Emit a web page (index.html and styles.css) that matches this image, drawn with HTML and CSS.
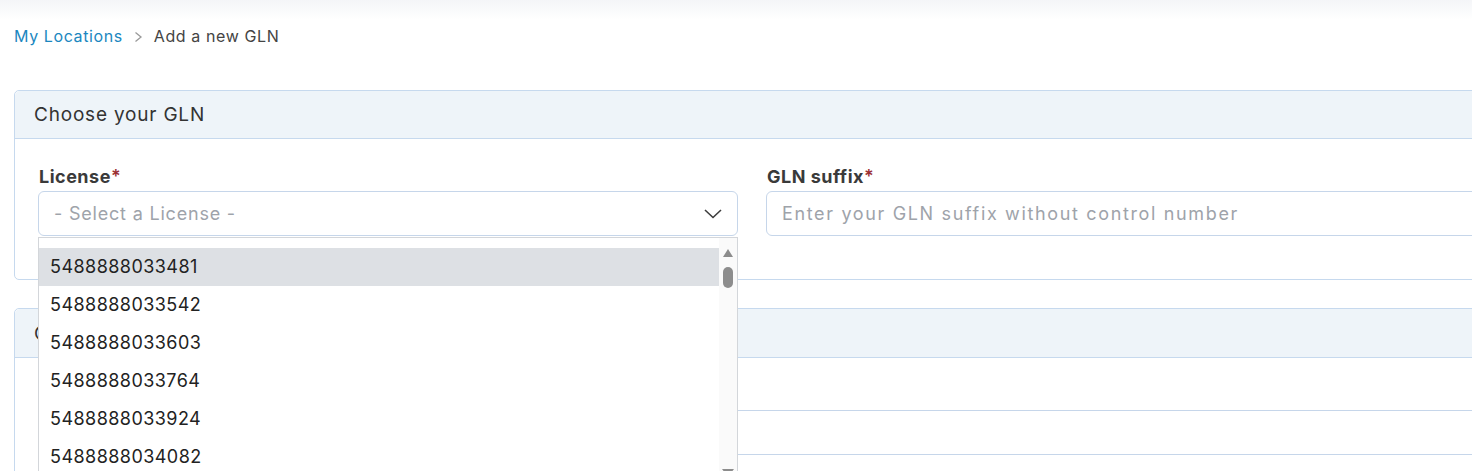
FILE: index.html
```html
<!DOCTYPE html>
<html lang="en">
<head>
<meta charset="utf-8">
<title>Add a new GLN</title>
<link rel="stylesheet" href="styles.css">
</head>
<body>
<div class="topshade"></div>
<nav class="breadcrumb">
  <a class="crumb-link" href="#">My Locations</a>
  <svg class="crumb-sep" width="9" height="12" viewBox="0 0 9 12"><path d="M1.5 1.5 L7 6 L1.5 10.5" fill="none" stroke="#9a9a9a" stroke-width="1.3"/></svg>
  <span class="crumb-current">Add a new GLN</span>
</nav>
<main class="main">
  <section class="card">
    <header class="card-header">Choose your GLN</header>
    <div class="card-body">
      <div class="grid">
        <div class="field">
          <label class="label">License<span class="req">*</span></label>
          <div class="select-wrap">
            <div class="select">
              <span class="placeholder ph-select">- Select a License -</span>
              <svg class="chev" width="18" height="10" viewBox="0 0 18 10"><path d="M1 1 L9 8.5 L17 1" fill="none" stroke="#3d3d3d" stroke-width="1.6"/></svg>
            </div>
            <div class="listbox">
              <ul class="options">
                <li class="option active">5488888033481</li>
                <li class="option">5488888033542</li>
                <li class="option">5488888033603</li>
                <li class="option">5488888033764</li>
                <li class="option">5488888033924</li>
                <li class="option">5488888034082</li>
              </ul>
              <div class="scrollbar">
                <span class="arrow-up"></span>
                <span class="thumb"></span>
                <span class="arrow-down"></span>
              </div>
            </div>
          </div>
        </div>
        <div class="field">
          <label class="label">GLN suffix<span class="req">*</span></label>
          <div class="input"><span class="placeholder ph-suffix">Enter your GLN suffix without control number</span></div>
        </div>
      </div>
    </div>
  </section>
  <section class="card card2">
    <header class="card-header header2">Company details</header>
    <div class="card-body">
      <label class="label">Location name<span class="req">*</span></label>
      <div class="input wide"></div>
    </div>
  </section>
</main>
</body>
</html>
```

FILE: styles.css
```css
html, body {
  margin: 0;
  padding: 0;
  background: #ffffff;
  overflow: hidden;
  height: 471px;
}
body {
  font-family: "Inter", "Lato", sans-serif;
  color: #333;
}
.topshade {
  height: 20px;
  background: linear-gradient(#f4f5f8, #ffffff);
}
.breadcrumb {
  display: flex;
  align-items: center;
  padding-left: 14px;
  height: 32px;
  font-size: 16px;
  letter-spacing: 0.6px;
}
.crumb-link {
  color: #1b87bf;
  text-decoration: none;
}
.crumb-sep {
  margin: 2px 11px 0 11px;
}
.crumb-current {
  color: #444;
}
.main {
  padding: 38px 0 0 14px;
  width: 1530px;
}
.card {
  border: 1px solid #c6d9ee;
  border-radius: 5px;
  background: #fff;
}
.card2 {
  margin-top: 28px;
}
.card-header {
  height: 47px;
  display: flex;
  align-items: center;
  padding-left: 19px;
  background: #eef4f9;
  border-bottom: 1px solid #c6d9ee;
  border-radius: 5px 5px 0 0;
  font-size: 19px;
  letter-spacing: 0.8px;
  color: #333;
}
.header2 {
  height: 48px;
}
.card-body {
  padding: 27px 23px 43px;
}
.grid {
  display: grid;
  grid-template-columns: 700px 1fr;
  gap: 28px;
}
.label {
  display: block;
  font-weight: 700;
  font-size: 18px;
  letter-spacing: 0.5px;
  color: #3a3a3a;
  height: 22px;
  line-height: 22px;
  margin: 0 0 3px 1px;
}
.req {
  color: #9b2f33;
  font-weight: 600;
}
.select-wrap {
  position: relative;
}
.select, .input {
  box-sizing: border-box;
  height: 45px;
  border: 1px solid #c6d6ea;
  border-radius: 6px;
  display: flex;
  align-items: center;
  padding: 0 15px;
  font-size: 18px;
}
.select {
  justify-content: space-between;
}
.placeholder {
  color: #9ea3aa;
  white-space: nowrap;
}
.ph-select {
  letter-spacing: 0.8px;
}
.ph-suffix {
  letter-spacing: 1.65px;
}
.wide {
  width: 100%;
}
.listbox {
  position: absolute;
  top: 46px;
  left: 0;
  width: 700px;
  height: 250px;
  box-sizing: border-box;
  border: 1px solid #d3d6da;
  background: #fff;
  display: flex;
  z-index: 5;
}
.options {
  list-style: none;
  margin: 0;
  padding: 10px 0 0;
  flex: 1;
  overflow: hidden;
}
.option {
  height: 38px;
  line-height: 38px;
  padding-left: 11px;
  font-size: 18px;
  letter-spacing: 0.45px;
  color: #222;
}
.option.active {
  background: #dde0e4;
}
.scrollbar {
  width: 18px;
  background: #fafafa;
  position: relative;
}
.arrow-up {
  position: absolute;
  left: 4px;
  top: 11px;
  width: 0;
  height: 0;
  border-left: 5px solid transparent;
  border-right: 5px solid transparent;
  border-bottom: 8px solid #8c8c8c;
}
.thumb {
  position: absolute;
  left: 4px;
  top: 29px;
  width: 10px;
  height: 21px;
  border-radius: 5px;
  background: #8d8d8d;
}
.arrow-down {
  position: absolute;
  left: 3px;
  top: 231px;
  width: 0;
  height: 0;
  border-left: 6px solid transparent;
  border-right: 6px solid transparent;
  border-top: 8px solid #8c8c8c;
}
```
